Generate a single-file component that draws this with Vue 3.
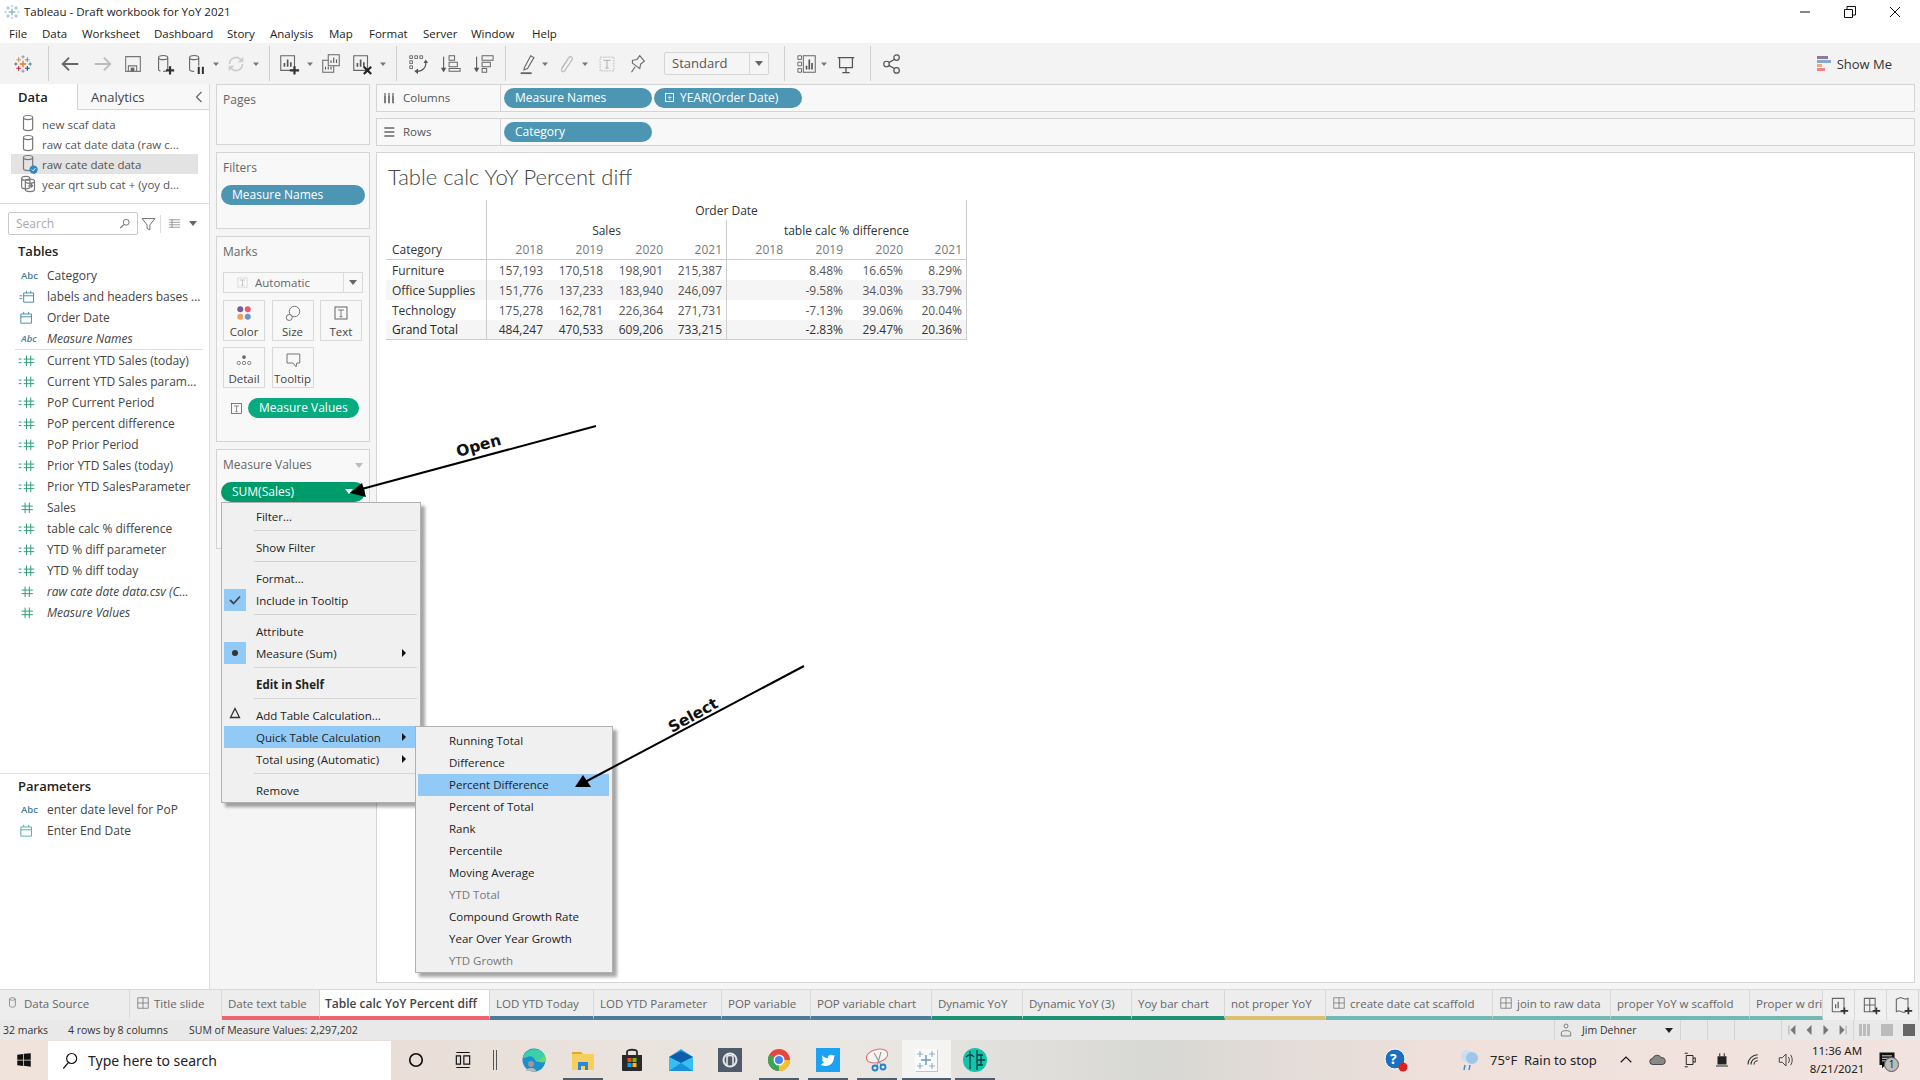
<script setup>
const g = '#666'
const s = (d, c = g, w = 1.3) => `<path d="${d}" fill="none" stroke="${c}" stroke-width="${w}"/>`
const cyl = (c = g) => s('M6 5c0-3 10-3 10 0v12c0 3-10 3-10 0zM6 5c0 3 10 3 10 0', c)
const cross = (x, y, r, c, w = 1.1) => s(`M${x - r} ${y}h${2 * r}M${x} ${y - r}v${2 * r}`, c, w)
const icons = {
  logo: cross(12, 12, 3.6, '#e8762b', 1.5) + cross(7.300, 7.300, 2.600, '#eb912b', 1.2) + cross(16.700, 7.300, 2.600, '#6f9bb0', 1.2) + cross(7.300, 16.700, 2.600, '#c72037', 1.2) + cross(16.700, 16.700, 2.600, '#1f4e79', 1.2) + cross(4.200, 12, 1.800, '#5b6591', 1) + cross(19.800, 12, 1.800, '#2f78a8', 1) + cross(12, 4.200, 1.800, '#7099a6', 1) + cross(12, 19.800, 1.800, '#7099a6', 1),
  back: s('M4 12h17M11 5l-7 7 7 7', '#666', 2),
  fwd: s('M3 12h17M13 5l7 7-7 7', '#bbb', 2),
  save: s('M4 4h16v16H4zM7 20v-6h9v6', '#777', 1.200) + '<rect x="9.500" y="16" width="4" height="4" fill="#666"/>',
  addds: s('M5 5c0-3 10-3 10 0v13c0 2-4 2-5 2M5 5c0 3 10 3 10 0M5 5v13c0 1 1 1.500 2 2', '#666', 1.200) + s('M13 19h9M17.500 14.500v9', '#333', 2.400),
  pause: s('M5 5c0-3 10-3 10 0v9M5 5c0 3 10 3 10 0M5 5v13c0 1 2 2 5 2', '#666', 1.200) + s('M15 15v8M19.500 15v8', '#333', 2.200),
  refresh: s('M5 12a7 7 0 0 1 12-5l2 2M19 12a7 7 0 0 1-12 5l-2-2', '#ccc', 1.800) + '<path d="M20 4v6h-6zM4 20v-6h6z" fill="#ccc"/>',
  caret: '<path d="M9 10.500h6l-3 3.500z" fill="#777"/>',
  newsheet: s('M3 3h15v16H3z', '#666', 1.200) + s('M7 15v-4M10.500 15V7M14 15v-5', '#555', 1.800) + s('M13 19h10M18 14.500v9', '#333', 2.400),
  dup: s('M9 2h12v12H9z', '#666', 1.100) + s('M12 11V8M15 11V5M18 11V7', '#555', 1.200) + s('M9 8H3v13h12v-7', '#666', 1.100) + s('M6 18v-3M9 18v-3M12 18v-3', '#555', 1.200),
  clear: s('M3 3h15v16H3z', '#666', 1.200) + s('M7 15v-4M10.500 15V7M14 15v-5', '#555', 1.800) + s('M14 15l8 8M22 15l-8 8', '#222', 2.400),
  swap: s('M3 3h3v3H3zM8.500 3h3v3h-3zM14 3h3v3h-3zM3 8.500h3v3H3zM3 14h3v3H3z', '#666', 1) + s('M20 9c2 6-3 11-9 11', '#555', 1.300) + '<path d="M12 17v6l-4-3zM18 11h5l-2.500-4z" fill="#555"/>',
  sorta: s('M5 4v15', '#666', 1.300) + '<path d="M2 16h6l-3 5z" fill="#555"/>' + s('M11 3h6v5h-6zM11 10h9v5h-9zM11 17h12v3H11z', '#666', 1.100),
  sortd: s('M5 4v15', '#666', 1.300) + '<path d="M2 16h6l-3 5z" fill="#555"/>' + s('M11 3h12v5H11zM11 10h9v5h-9zM11 17h5v4h-5z', '#666', 1.100),
  pen: s('M8 16L15 3l3.500 2-7 12-4 1.500z', '#666', 1.200) + '<rect x="4" y="21" width="12" height="2" fill="#666"/>',
  clip: s('M7 17l8-12c2-2.500 5 0 3.500 2.500l-8 12c-2 2-4.500 0-3-2.500l6.500-10', '#bbb', 1.300),
  tbox: '<rect x="4.500" y="4.500" width="15" height="15" fill="none" stroke="#bbb" stroke-dasharray="2 1"/>' + s('M8 8h8M12 8v8.500M10 16.500h4', '#aaa', 1),
  pin: s('M6 21l4-6M7 11l8 6 1-5 4-3-5-6-3 4-5 1z', '#666', 1.200),
  bars: s('M2 3h4v4H2zM2 10h4v4H2zM2 17h4v4H2z', '#666', 1) + s('M8 3h13v18H8z', '#666', 1.100) + s('M11.500 18v-4M14.500 18V7M17.500 18v-7', '#555', 1.800),
  present: s('M3 5h18M5 5v11h14V5M12 16v5M8 21.500h8', '#555', 1.400),
  share: '<circle cx="6" cy="12" r="3" fill="none" stroke="#555" stroke-width="1.300"/><circle cx="17" cy="5" r="3" fill="none" stroke="#555" stroke-width="1.300"/><circle cx="17" cy="19" r="3" fill="none" stroke="#555" stroke-width="1.300"/>' + s('M8.500 10.500L14.500 7M8.500 13.500l6 3.500', '#555'),
  ds: cyl('#777'),
  dssel: cyl('#777') + '<circle cx="17" cy="18" r="4.500" fill="#2f88c4"/>' + s('M15 18l1.500 1.500 2.500-3', '#fff', 1),
  dsmulti: s('M4 6c0-3 9-3 9 0v9c0 3-9 3-9 0zM4 6c0 2.500 9 2.500 9 0', '#777') + s('M8 9c0-3 10-3 10 0v9c0 3-10 3-10 0zM8 9c0 3 10 3 10 0', '#777') + s('M11 14h5M14 12l2 2-2 2', '#777'),
  search: '<circle cx="14" cy="9" r="5" fill="none" stroke="#666" stroke-width="1.500"/>' + s('M10 13l-6 6', '#666', 1.800),
  funnel: s('M3 5h18l-7 9v7l-4-2v-5z', '#666', 1.300),
  list: s('M3 6h18M3 10h18M3 14h18M3 18h18', '#666', 1) + s('M8 5v14', '#666', 1),
  cal: s('M4 7h15v13H4zM4 11h15M8 4v3M15 4v3', '#3f86a8', 1.300),
  calg: s('M4 7h15v13H4zM4 11h15M8 4v3M15 4v3', '#49ac8c', 1.300),
  calcal: s('M8 7h14v13H8zM8 11h14M12 4v3M18 4v3', '#3f86a8', 1.300) + s('M2 11h4M2 15h4', '#3f86a8', 1.200),
  hash: s('M10 5v15M16 5v15M5 10h16M5 15h16', '#2f9e78', 1.400),
  hashcalc: s('M12 5v15M18 5v15M8 10h15M8 15h15', '#2f9e78', 1.400) + s('M1 10h4M1 15h4', '#2f9e78', 1.400),
  color: '<circle cx="7" cy="7" r="4" fill="#7b5d92"/><circle cx="17" cy="7" r="4" fill="#ec5a6e"/><circle cx="7" cy="17" r="4" fill="#f0a266"/><circle cx="17" cy="17" r="4" fill="#6f95c8"/>',
  size: '<circle cx="14" cy="10" r="7" fill="none" stroke="#666" stroke-width="1.200"/><circle cx="7" cy="18" r="4" fill="#f8f8f8" stroke="#666" stroke-width="1.200"/>',
  text: '<rect x="4" y="4" width="16" height="16" fill="none" stroke="#555" stroke-width="1.200"/>' + s('M8 8h8M12 8v9M10 17h4', '#555', 1),
  detail: '<circle cx="12" cy="8" r="2.500" fill="#666"/>' + [5, 12, 19].map(x => `<circle cx="${x}" cy="16" r="2.200" fill="none" stroke="#666"/>`).join(''),
  tip: s('M4 4h17v12h-4l-1 5-4-5H4z', '#666', 1.200),
  grid: s('M3 3h18v18H3zM12 3v18M3 12h18', '#666', 1.200),
  addws: s('M4 4h14v16H4z') + s('M8 16v-5M11 16V8', '#555', 1.400) + s('M14 19h9M18.500 15v8', '#333', 2),
  addgrid: s('M4 4h13v16H4zM4 12h13M10.500 4v16') + s('M14 19h9M18.500 15v8', '#333', 2),
  addstory: s('M4 5l5-2 6 2 3-1v15l-5 2-6-2-3 1z') + s('M14 19h9M18.500 15v8', '#333', 2),
  user: '<circle cx="12" cy="6" r="3" fill="none" stroke="#666" stroke-width="1.200"/>' + s('M5 21v-5c0-4 14-4 14 0v5z', '#666', 1.200),
  win: '<path d="M3 5l8-1v7.500H3zM12 3.800L21 3v8.500h-9zM3 12.500h8V20l-8-1zM12 12.500h9V21l-9-1.200z" fill="#111"/>',
  tsearch: '<circle cx="14" cy="9" r="6" fill="none" stroke="#111" stroke-width="1.400"/>' + s('M10 14l-6 7', '#111', 1.500),
  cortana: '<circle cx="12" cy="12" r="7.500" fill="none" stroke="#111" stroke-width="2"/>',
  taskview: s('M4 3h16M4 21h16M4 7h5v10H4zM13 7h7v10h-7z', '#111', 1.400),
  edge: '<circle cx="12" cy="12" r="11.500" fill="#1c8fd0"/><path d="M1 10C3 1 16-2 22 6c3 4 1 8-3 8-3 0-5 0-6-2-1-3-5-5-8-3-2 1-3 1-4 1z" fill="#3ad0a8"/><path d="M22 7c1.500 2 2 5 1 7-3 1-7 0-8-2 3 0 5-1 7-5z" fill="#68d868"/><circle cx="9" cy="16" r="3" fill="#9a9a98"/><path d="M4 23c0-4 10-4 10 0z" fill="#b9b9b6"/>',
  folder: '<path d="M1 4h9l2 2H1z" fill="#e0a92c"/><path d="M1 6h22v16H1z" fill="#f7cf5f"/><path d="M7 22v-8h10v8h-3v-4h-4v4z" fill="#2a86d8"/>',
  store: '<path d="M2 7h20v15a1 1 0 0 1-1 1H3a1 1 0 0 1-1-1z" fill="#2a2a2a"/>' + s('M7 8V4c0-3 10-3 10 0v4', '#2a2a2a', 1.800) + '<rect x="7.500" y="10" width="4" height="4" fill="#f25022"/><rect x="12.500" y="10" width="4" height="4" fill="#7fba00"/><rect x="7.500" y="15" width="4" height="4" fill="#00a4ef"/><rect x="12.500" y="15" width="4" height="4" fill="#ffb900"/>',
  mail: '<path d="M0 9L12 1l12 8v14H0z" fill="#2aa5e6"/><path d="M0 9l12 6 12-6-12-6z" fill="#0f5cab"/><path d="M0 9l12 6 12-6v14H0z" fill="#36c0f0"/><path d="M0 23l12-8 12 8z" fill="#1a8fdc"/>',
  music: '<rect x="0" y="0" width="24" height="24" fill="#4f5b6b"/><circle cx="12" cy="12" r="7.500" fill="#e8e8e8"/><circle cx="12" cy="12" r="5.500" fill="#4f5b6b"/>' + s('M9 17V9c0-2 6-2 6 0v8', '#e8e8e8', 1.600),
  chrome: '<circle cx="12" cy="12" r="11" fill="#e8453c"/><path d="M12 12L2.500 6.500A11 11 0 0 0 12 23z" fill="#34a853"/><path d="M12 12h11A11 11 0 0 1 12 23z" fill="#fbc02d"/><circle cx="12" cy="12" r="5.500" fill="#fff"/><circle cx="12" cy="12" r="4" fill="#4285f4"/>',
  twitter: '<rect x="0" y="0" width="24" height="24" fill="#1da1f2"/><path d="M5 17c6 2.500 13 0 13-8l1.500-1.700-2 .4C16 5.500 11 7 12 10.200c-2.500 0-4.500-1.200-6-2.900 0 2 0 3.200 1.500 4.200l-1.500-.3c0 1.600 1 2.600 2.400 3.100-1 .6-2.300 1.400-3.400 2.700z" fill="#fff"/>',
  snip: '<ellipse cx="12" cy="8" rx="11" ry="6.500" transform="rotate(-15 12 8)" fill="#fff" fill-opacity=".6" stroke="#e67070" stroke-width="1"/>' + s('M9 5l7 12M16 4l-4 14', '#999', 1.200) + '<circle cx="10" cy="20" r="2.500" fill="none" stroke="#1f7fd0" stroke-width="1.800"/><circle cx="18" cy="19" r="2.500" fill="none" stroke="#1f7fd0" stroke-width="1.800"/>',
  tab: cross(12, 12, 5, '#6f9bc0', 1.500) + cross(6, 6, 3, '#8cb3d0', 1.200) + cross(18, 6, 3, '#8cb3d0', 1.200) + cross(6, 18, 3, '#8cb3d0', 1.200) + cross(18, 18, 3, '#8cb3d0', 1.200) + cross(12, 3, 2, '#a8c4d8', 1) + cross(12, 21, 2, '#a8c4d8', 1) + cross(2.500, 12, 2, '#a8c4d8', 1) + cross(21.500, 12, 2, '#a8c4d8', 1),
  tabtile: '<path d="M1 1h22v22H1z" fill="#fafafa"/><path d="M23 2h1v22H2v-1h21z" fill="#c4c4c4"/>' + cross(12, 12, 5, '#6f9bc0', 1.500) + cross(6, 6, 3, '#8cb3d0', 1.200) + cross(18, 6, 3, '#8cb3d0', 1.200) + cross(6, 18, 3, '#8cb3d0', 1.200) + cross(18, 18, 3, '#8cb3d0', 1.200),
  app: '<circle cx="12" cy="12" r="12" fill="#11c4ae"/>' + s('M7 3v18M3 9c2-3 6-3 8 0M14 2v20M14 7h6M14 12h8M14 17h6M18 7v10', '#0a3d38', 1.300),
  help: '<circle cx="11" cy="11" r="10" fill="#1a6fc4"/><circle cx="11" cy="11" r="10" fill="none" stroke="#fff"/><circle cx="19" cy="19" r="4.500" fill="#e02020"/>',
  weather: '<circle cx="10" cy="8" r="6" fill="#c8dff2"/><circle cx="15" cy="10" r="6" fill="#9cc6ea"/>' + s('M8 17l-1 5M13 17l-1 5', '#3e8fd6', 1.500),
  chev: s('M5 15l7-7 7 7', '#111', 1.500),
  cloud: '<path d="M5 18a4 4 0 0 1 0-8c1-5 9-6 11-1a4.500 4.500 0 0 1 2 9z" fill="#888" stroke="#222"/>',
  cam: s('M7 6h9v12H7zM16 10l3-1v6l-3-1M5 3h4M5 21h4', '#222', 1.300),
  batt: '<path d="M6 7h12v11H6z" fill="#222"/>' + s('M9 3v4M15 3v4M4 20h16', '#222', 1.300),
  wifi: s('M4 18a13 13 0 0 1 13-13M8 18a9 9 0 0 1 9-9M12 18a5 5 0 0 1 5-5', '#333', 1.500),
  vol: s('M3 9h4l5-5v16l-5-5H3zM15 8c2 2 2 6 0 8M18 5c3 4 3 10 0 14', '#333', 1.200),
  note: '<path d="M3 3h18v15H10l-4 4v-4H3z" fill="#111"/>' + s('M6 7h12M6 10h12M6 13h8', '#fff', 1)
}

const place = (items, start) => {
  let prev = start
  return items.map(([i, x]) => {
    const w = i === 'sep' ? 1 : i === 'caret' ? 12 : 22
    const left = x - w / 2
    const m = left - prev
    prev = left + w
    return { i, m, vb: i === 'caret' ? '6 6 12 12' : '0 0 24 24', w }
  })
}
const tbLeft = place([
  ['logo', 23], ['sep', 48], ['back', 70], ['fwd', 103], ['save', 133], ['addds', 165], ['pause', 196], ['caret', 216], ['refresh', 236], ['caret', 256], ['sep', 269],
  ['newsheet', 289], ['caret', 310], ['dup', 331], ['clear', 362], ['caret', 383], ['sep', 396], ['swap', 418], ['sorta', 450], ['sortd', 483], ['sep', 505],
  ['pen', 528], ['caret', 545], ['clip', 566], ['caret', 585], ['tbox', 607], ['pin', 637]
], 0)
const tbRight = place([['sep', 784], ['bars', 807], ['caret', 824], ['present', 846], ['sep', 870], ['share', 892]], 769)

const menus = [['File', 9], ['Data', 42], ['Worksheet', 82], ['Dashboard', 154], ['Story', 227], ['Analysis', 270], ['Map', 329], ['Format', 369], ['Server', 423], ['Window', 471], ['Help', 532], ['', 580]]
  .map(([t, x], k, a) => ({ t, w: k < a.length - 1 ? a[k + 1][1] - x : 0 })).filter(m => m.t)

const dss = [
  { i: 'ds', t: 'new scaf data' }, { i: 'ds', t: 'raw cat date data (raw c...' },
  { i: 'dssel', t: 'raw cate date data', sel: true }, { i: 'dsmulti', t: 'year qrt sub cat + (yoy d...' }
]
const dims = [
  { i: 'abc', t: 'Category' }, { i: 'calcal', t: 'labels and headers bases ...' }, { i: 'cal', t: 'Order Date' }, { i: 'abc', t: 'Measure Names', em: true }
]
const meas = [
  ['hashcalc', 'Current YTD Sales (today)'], ['hashcalc', 'Current YTD Sales param...'], ['hashcalc', 'PoP Current Period'], ['hashcalc', 'PoP percent difference'],
  ['hashcalc', 'PoP Prior Period'], ['hashcalc', 'Prior YTD Sales (today)'], ['hashcalc', 'Prior YTD SalesParameter'], ['hash', 'Sales'], ['hashcalc', 'table calc % difference'],
  ['hashcalc', 'YTD % diff parameter'], ['hashcalc', 'YTD % diff today'], ['hash', 'raw cate date data.csv (C...', true], ['hash', 'Measure Values', true]
].map(([i, t, em]) => ({ i, t, em }))

const years = ['2018', '2019', '2020', '2021']
const rows = [
  { n: 'Furniture', v: ['157,193', '170,518', '198,901', '215,387', '', '8.48%', '16.65%', '8.29%'] },
  { n: 'Office Supplies', shade: true, v: ['151,776', '137,233', '183,940', '246,097', '', '-9.58%', '34.03%', '33.79%'] },
  { n: 'Technology', v: ['175,278', '162,781', '226,364', '271,731', '', '-7.13%', '39.06%', '20.04%'] },
  { n: 'Grand Total', shade: true, total: true, v: ['484,247', '470,533', '609,206', '733,215', '', '-2.83%', '29.47%', '20.36%'] }
]

const menu1 = [
  { t: 'Filter...' }, { sep: 1 }, { t: 'Show Filter' }, { sep: 1 }, { t: 'Format...' }, { t: 'Include in Tooltip', mark: 'check' }, { sep: 1 },
  { t: 'Attribute' }, { t: 'Measure (Sum)', mark: 'dot', sub: true }, { sep: 1 }, { t: 'Edit in Shelf', bold: true }, { sep: 1 },
  { t: 'Add Table Calculation...', mark: 'delta' }, { t: 'Quick Table Calculation', sub: true, hi: true }, { t: 'Total using (Automatic)', sub: true }, { sep: 1 }, { t: 'Remove' }
]
const menu2 = [
  { t: 'Running Total' }, { t: 'Difference' }, { t: 'Percent Difference', hi: true }, { t: 'Percent of Total' }, { t: 'Rank' }, { t: 'Percentile' }, { t: 'Moving Average' },
  { t: 'YTD Total', dis: true }, { t: 'Compound Growth Rate' }, { t: 'Year Over Year Growth' }, { t: 'YTD Growth', dis: true }
]

const red = '#f1626f', blue = '#4e7a9c', green = '#1c9273', yel = '#dcc070', teal = '#73b9b3'
const tabs = [
  { t: 'Data Source', w: 130, i: 'ds' }, { t: 'Title slide', w: 92, i: 'grid' }, { t: 'Date text table', w: 98, c: red },
  { t: 'Table calc YoY Percent diff', w: 170, c: red, on: true }, { t: 'LOD YTD Today', w: 104, c: blue }, { t: 'LOD YTD Parameter', w: 128, c: blue },
  { t: 'POP variable', w: 89, c: blue }, { t: 'POP variable chart', w: 121, c: blue }, { t: 'Dynamic YoY', w: 91, c: green }, { t: 'Dynamic YoY (3)', w: 109, c: green },
  { t: 'Yoy bar chart', w: 93, c: green }, { t: 'not proper YoY', w: 101, c: yel }, { t: 'create date cat scaffold', w: 167, c: teal, i: 'grid' },
  { t: 'join to raw data', w: 118, c: teal, i: 'grid' }, { t: 'proper YoY w scaffold', w: 139, c: teal }, { t: 'Proper w dri', w: 73, c: teal }
]
const apps = [['edge'], ['folder', 1], ['store'], ['mail'], ['music'], ['chrome', 1], ['twitter', 1], ['snip', 1], ['tabtile', 1, 1], ['app', 1]]
  .map(([i, run, act]) => ({ i, run, act }))
const navs = ['M1 0v10M8 0v10L3 5z', 'M7 0v10L2 5z', 'M2 0v10l5-5z', 'M8 0v10M1 0v10l5-5z']
</script>

<template>
  <div class="app">
    <header class="titlebar">
      <svg class="ti" viewBox="0 0 24 24" v-html="icons.tab"></svg>
      <span class="titletext">Tableau - Draft workbook for YoY 2021</span>
      <div class="winbtns">
        <svg width="12" height="12" viewBox="0 0 12 12"><path d="M1 6h10" stroke="#111" /></svg>
        <svg width="12" height="12" viewBox="0 0 12 12"><path d="M.5 3.500h8v8h-8zM3 3.500V.5h8.500V9H8.500" fill="none" stroke="#111" /></svg>
        <svg width="12" height="12" viewBox="0 0 12 12"><path d="M1 1l10 10M11 1L1 11" stroke="#111" /></svg>
      </div>
    </header>
    <nav class="menubar">
      <span v-for="m in menus" :key="m.t" class="menuitem" :style="{ width: m.w + 'px' }">{{ m.t }}</span>
    </nav>
    <div class="toolbar">
      <template v-for="(b, k) in tbLeft" :key="k">
        <span v-if="b.i === 'sep'" class="tbsep" :style="{ marginLeft: b.m + 'px' }"></span>
        <svg v-else class="tbi" :width="b.w" height="22" :viewBox="b.vb" :style="{ marginLeft: b.m + 'px' }" v-html="icons[b.i]"></svg>
      </template>
      <div class="standard"><span class="stdtext">Standard</span><span class="stdarrow"><i class="tri"></i></span></div>
      <template v-for="(b, k) in tbRight" :key="'r' + k">
        <span v-if="b.i === 'sep'" class="tbsep" :style="{ marginLeft: b.m + 'px' }"></span>
        <svg v-else class="tbi" :width="b.w" height="22" :viewBox="b.vb" :style="{ marginLeft: b.m + 'px' }" v-html="icons[b.i]"></svg>
      </template>
      <div class="showme">
        <div class="smicon"><i class="s1"></i><i class="s2"></i><i class="s3"></i><i class="s4"></i></div>
        <span>Show Me</span>
      </div>
    </div>

    <main class="main">
      <aside class="left">
        <div class="ltabs">
          <div class="ltab on">Data</div>
          <div class="ltab off">Analytics
            <svg class="collapse" width="8" height="12" viewBox="0 0 8 12"><path d="M6.500 1L1.500 6l5 5" fill="none" stroke="#666" stroke-width="1.200" /></svg>
          </div>
        </div>
        <div class="dslist">
          <div v-for="d in dss" :key="d.t" class="dsrow" :class="{ sel: d.sel }">
            <svg class="dsi" viewBox="0 0 24 24" v-html="icons[d.i]"></svg>
            <span>{{ d.t }}</span>
          </div>
        </div>
        <div class="searchbar">
          <div class="searchbox"><span>Search</span><svg class="si" viewBox="0 0 24 24" v-html="icons.search"></svg></div>
          <svg class="fi" viewBox="0 0 24 24" v-html="icons.funnel"></svg>
          <span class="vsep"></span>
          <svg class="li" viewBox="0 0 24 24" v-html="icons.list"></svg>
          <i class="tri small"></i>
        </div>
        <h3 class="lhead">Tables</h3>
        <div v-for="f in dims" :key="f.t" class="field" :class="{ em: f.em }">
          <span class="ficon">
            <span v-if="f.i === 'abc'" class="abc">Abc</span>
            <svg v-else viewBox="0 0 24 24" v-html="icons[f.i]"></svg>
          </span>
          <span>{{ f.t }}</span>
        </div>
        <div class="fdiv"></div>
        <div v-for="f in meas" :key="f.t" class="field" :class="{ em: f.em }">
          <span class="ficon"><svg viewBox="0 0 24 24" v-html="icons[f.i]"></svg></span>
          <span>{{ f.t }}</span>
        </div>
        <div class="lspacer"></div>
        <div class="params">
          <h3 class="lhead">Parameters</h3>
          <div class="field"><span class="ficon"><span class="abc">Abc</span></span><span>enter date level for PoP</span></div>
          <div class="field"><span class="ficon"><svg viewBox="0 0 24 24" v-html="icons.calg"></svg></span><span>Enter End Date</span></div>
        </div>
      </aside>

      <section class="cards">
        <div class="card pages"><div class="clabel">Pages</div></div>
        <div class="card filters">
          <div class="clabel">Filters</div>
          <div class="pill blue wide">Measure Names</div>
        </div>
        <div class="card marks">
          <div class="clabel">Marks</div>
          <div class="markdd">
            <svg class="mi" viewBox="0 0 24 24" v-html="icons.tbox"></svg>
            <span class="mdtext">Automatic</span>
            <span class="mdarrow"><i class="tri"></i></span>
          </div>
          <div class="markbtns">
            <div class="mbtn"><svg viewBox="0 0 24 24" v-html="icons.color"></svg><span>Color</span></div>
            <div class="mbtn"><svg viewBox="0 0 24 24" v-html="icons.size"></svg><span>Size</span></div>
            <div class="mbtn"><svg viewBox="0 0 24 24" v-html="icons.text"></svg><span>Text</span></div>
            <div class="mbtn"><svg viewBox="0 0 24 24" v-html="icons.detail"></svg><span>Detail</span></div>
            <div class="mbtn"><svg viewBox="0 0 24 24" v-html="icons.tip"></svg><span>Tooltip</span></div>
          </div>
          <div class="markpill">
            <svg class="mti" viewBox="0 0 24 24" v-html="icons.text"></svg>
            <div class="pill teal">Measure Values</div>
          </div>
        </div>
        <div class="card mv">
          <div class="clabel mvlabel">Measure Values<i class="tri light"></i></div>
          <div class="pill green wide">SUM(Sales)<i class="tri white"></i></div>
        </div>
      </section>

      <section class="right">
        <div class="shelf">
          <div class="shelfhead"><svg class="shi" viewBox="0 0 24 24"><path d="M6 5v15M12 5v15M18 5v15" stroke="#666" stroke-width="2.500" stroke-dasharray="2 1 30" /></svg>Columns</div>
          <div class="pill blue shpill">Measure Names</div>
          <div class="pill blue shpill"><span class="plus">+</span>YEAR(Order Date)</div>
        </div>
        <div class="shelf">
          <div class="shelfhead"><svg class="shi" viewBox="0 0 24 24"><path d="M5 6h15M5 12h15M5 18h15" stroke="#666" stroke-width="2.500" /></svg>Rows</div>
          <div class="pill blue shpill">Category</div>
        </div>
        <div class="view">
          <h1 class="vtitle">Table calc YoY Percent diff</h1>
          <div class="xtab">
            <div class="c vr span2"></div>
            <div class="c hd center span8 rb">Order Date</div>
            <div class="c hd center span4 vr">Sales</div>
            <div class="c hd center span4 rb">table calc % difference</div>
            <div class="c hd catc vr bb">Category</div>
            <div v-for="(y, i) in [...years, ...years]" :key="i" class="c yr bb" :class="{ vr: i === 3 || i === 7 }">{{ y }}</div>
            <template v-for="r in rows" :key="r.n">
              <div class="c catc vr name" :class="{ shade: r.shade, bb: r.total, strong: r.total }">{{ r.n }}</div>
              <div v-for="(v, i) in r.v" :key="i" class="c num" :class="{ vr: i === 3 || i === 7, shade: r.shade, bb: r.total, strong: r.total }">{{ v }}</div>
            </template>
          </div>
        </div>
      </section>
    </main>

    <div class="tabs">
      <div v-for="t in tabs" :key="t.t" class="tab" :class="{ on: t.on }" :style="{ width: t.w + 'px', borderBottomColor: t.c || 'transparent' }">
        <svg v-if="t.i" class="tabi" viewBox="0 0 24 24" v-html="icons[t.i]"></svg>
        <span>{{ t.t }}</span>
      </div>
      <div class="tabbtn"><svg viewBox="0 0 24 24" v-html="icons.addws"></svg></div>
      <div class="tabbtn"><svg viewBox="0 0 24 24" v-html="icons.addgrid"></svg></div>
      <div class="tabbtn"><svg viewBox="0 0 24 24" v-html="icons.addstory"></svg></div>
    </div>

    <div class="status">
      <span class="st1">32 marks</span>
      <span class="st2">4 rows by 8 columns</span>
      <span>SUM of Measure Values: 2,297,202</span>
      <div class="stright">
        <div class="stuser">
          <svg viewBox="0 0 24 24" v-html="icons.user"></svg><span>Jim Dehner</span><i class="tri dark"></i>
        </div>
        <div class="stcell"></div>
        <div class="stcell"></div>
        <div class="stblank"></div>
        <div class="stnav">
          <svg v-for="n in navs" :key="n" width="8" height="10" viewBox="0 0 9 10"><path :d="n" fill="#777" stroke="#777" stroke-width=".6" /></svg>
        </div>
        <div class="stview">
          <i class="v1"></i><i class="v2"></i><i class="v3"></i>
        </div>
      </div>
    </div>

    <footer class="taskbar">
      <div class="winlogo"><svg viewBox="0 0 24 24" v-html="icons.win"></svg></div>
      <div class="tsearch"><svg viewBox="0 0 24 24" v-html="icons.tsearch"></svg><span>Type here to search</span></div>
      <div class="tslot first"><svg viewBox="0 0 24 24" v-html="icons.cortana"></svg></div>
      <div class="tslot tv"><svg viewBox="0 0 24 24" v-html="icons.taskview"></svg></div>
      <div class="grip"></div>
      <div v-for="a in apps" :key="a.i" class="app-slot" :class="{ run: a.run, act: a.act }">
        <svg viewBox="0 0 24 24" v-html="icons[a.i]"></svg>
      </div>
      <div class="tray">
        <div class="helpic"><svg viewBox="0 0 24 24" v-html="icons.help"></svg><span class="q">?</span></div>
        <svg class="wx" viewBox="0 0 24 24" v-html="icons.weather"></svg>
        <span class="wxtext">75°F&nbsp;&nbsp;Rain to stop</span>
        <svg class="tr chev" viewBox="0 0 24 24" v-html="icons.chev"></svg>
        <svg class="tr" viewBox="0 0 24 24" v-html="icons.cloud"></svg>
        <svg class="tr" viewBox="0 0 24 24" v-html="icons.cam"></svg>
        <svg class="tr" viewBox="0 0 24 24" v-html="icons.batt"></svg>
        <svg class="tr" viewBox="0 0 24 24" v-html="icons.wifi"></svg>
        <svg class="tr" viewBox="0 0 24 24" v-html="icons.vol"></svg>
        <div class="clock"><span>11:36 AM</span><span>8/21/2021</span></div>
        <div class="notif"><svg viewBox="0 0 24 24" v-html="icons.note"></svg><span class="nbadge">1</span></div>
      </div>
    </footer>

    <div class="ctx m1">
      <template v-for="(m, k) in menu1" :key="k">
        <div v-if="m.sep" class="msep"></div>
        <div v-else class="mrow" :class="{ hi: m.hi, bold: m.bold }">
          <span class="mmark" :class="{ blue: m.mark === 'check' || m.mark === 'dot' }">
            <svg v-if="m.mark === 'check'" width="14" height="14" viewBox="0 0 14 14"><path d="M2 7l3.500 3.500L12 3.500" fill="none" stroke="#444" stroke-width="1.800" /></svg>
            <i v-else-if="m.mark === 'dot'" class="mdot"></i>
            <svg v-else-if="m.mark === 'delta'" class="mdelta" width="12" height="12" viewBox="0 0 12 12"><path d="M6 1.500L10.500 10.500H1.500z" fill="none" stroke="#333" stroke-width="1.300" /></svg>
          </span>
          <span class="mlabel">{{ m.t }}</span>
          <i v-if="m.sub" class="subarrow"></i>
        </div>
      </template>
    </div>
    <div class="ctx m2">
      <div v-for="m in menu2" :key="m.t" class="mrow2" :class="{ hi: m.hi, dis: m.dis }">{{ m.t }}</div>
    </div>

    <svg class="annot" width="1920" height="1080" viewBox="0 0 1920 1080">
      <path d="M596 426L358 490" stroke="#000" stroke-width="2" />
      <path d="M350 493L362 483L366 497z" fill="#000" />
      <path d="M804 666L585 782" stroke="#000" stroke-width="2" />
      <path d="M575 787L583 775L591 787z" fill="#000" />
      <text x="0" y="0" class="annot-t" transform="translate(458 457) rotate(-16)">Open</text>
      <text x="0" y="0" class="annot-t" transform="translate(672 733) rotate(-29)">Select</text>
    </svg>
  </div>
</template>

<style>
html, body { margin: 0; padding: 0; background: #fff; }
</style>

<style scoped>
.app {
  position: relative; width: 1920px; height: 1080px; overflow: hidden; display: flex; flex-direction: column;
  font-family: "Open Sans", "Noto Sans", sans-serif; font-size: 12px; color: #333; background: #fff;
}
svg { display: block; flex: none; }
i { display: block; }

.titlebar { height: 23px; display: flex; align-items: center; padding-left: 4px; color: #222; flex: none; }
.ti { width: 16px; height: 16px; margin-right: 4px; }
.titletext { font-size: 11.5px; }
.winbtns { margin-left: auto; display: flex; gap: 33px; padding-right: 19px; }
.menubar { height: 20px; display: flex; align-items: center; padding-left: 9px; flex: none; color: #222; font-size: 11.5px; }
.menuitem { flex: none; white-space: nowrap; }

.toolbar { height: 41px; flex: none; background: #f3f3f3; display: flex; align-items: center; }
.tbi { flex: none; }
.tbsep { width: 1px; height: 35px; background: #d0d0d0; flex: none; }
.standard { width: 105px; height: 23px; margin-left: 16px; border: 1px solid #d4d4d4; border-radius: 2px; box-sizing: border-box; display: flex; align-items: center; background: #f5f5f5; flex: none; }
.stdtext { flex: 1; padding-left: 7px; color: #555; font-size: 13px; padding-bottom: 1px; }
.stdarrow { width: 18px; height: 100%; border-left: 1px solid #d8d8d8; display: flex; align-items: center; justify-content: center; }
.tri { width: 0; height: 0; border-left: 4px solid transparent; border-right: 4px solid transparent; border-top: 5px solid #666; }
.showme { margin-left: auto; display: flex; align-items: center; gap: 6px; padding-right: 28px; font-size: 13px; color: #333; }
.smicon { width: 14px; display: flex; flex-direction: column; gap: 1px; }
.smicon i { height: 3px; }
.s1 { width: 11px; background: #8a7aa0; }
.s2 { width: 14px; background: #86a7cf; }
.s3 { width: 5px; background: #f3a77a; }
.s4 { width: 8px; background: #f4808a; }

.main { flex: 1; min-height: 0; display: flex; background: #f5f5f5; }
.left { width: 210px; flex: none; box-sizing: border-box; border-right: 1px solid #dcdcdc; background: #fff; display: flex; flex-direction: column; }
.ltabs { display: flex; height: 26px; flex: none; }
.ltab { display: flex; align-items: center; box-sizing: border-box; font-size: 13px; }
.ltab.on { width: 77px; padding-left: 18px; font-weight: 600; color: #222; }
.ltab.off { flex: 1; padding-left: 13px; color: #444; border-left: 1px solid #d4d4d4; border-bottom: 1px solid #d4d4d4; background: #f8f8f8; }
.collapse { margin-left: auto; margin-right: 6px; }
.dslist { padding: 4px 0 9px; border-bottom: 1px solid #dcdcdc; }
.dsrow { height: 20px; margin: 0 11px; padding-left: 10px; display: flex; align-items: center; color: #555; font-size: 11.5px; gap: 2px; white-space: nowrap; }
.dsrow.sel { background: #e3e3e3; }
.dsi { width: 22px; height: 22px; margin-left: -3px; }
.searchbar { display: flex; align-items: center; padding: 8px 0 0 8px; height: 23px; }
.searchbox { width: 130px; height: 23px; box-sizing: border-box; border: 1px solid #c8c8c8; border-radius: 2px; display: flex; align-items: center; justify-content: space-between; padding: 0 5px 0 7px; color: #aaa; }
.si { width: 14px; height: 14px; }
.fi { width: 17px; height: 17px; margin-left: 2px; }
.vsep { width: 1px; height: 18px; background: #ddd; margin: 0 6px 0 3px; }
.li { width: 15px; height: 15px; }
.tri.small { margin-left: 7px; }
.lhead { margin: 0; padding-left: 18px; height: 20px; line-height: 20px; font-size: 13px; font-weight: 600; color: #222; }
.searchbar + .lhead { margin-top: 6px; margin-bottom: 3.5px; flex: none; }
.field { height: 21px; flex: none; display: flex; align-items: center; font-size: 12px; color: #444; white-space: nowrap; }
.field.em { font-style: italic; }
.ficon { width: 47px; flex: none; padding-left: 19px; box-sizing: border-box; display: flex; align-items: center; }
.ficon svg { width: 17px; height: 17px; margin-left: -1px; }
.abc { font-size: 9.5px; color: #3f7f9e; font-weight: 600; margin-left: 2px; }
.fdiv { height: 1px; background: #dcdcdc; margin: 0 6px 0 15px; flex: none; }
.lspacer { flex: 1; }
.params { border-top: 1px solid #e2e2e2; padding: 2px 0 0; height: 216px; box-sizing: border-box; flex: none; }
.params .lhead { margin-bottom: 3px; }

.cards { width: 154px; flex: none; margin: 0 6px; display: flex; flex-direction: column; gap: 7px; box-sizing: border-box; }
.card { box-sizing: border-box; border: 1px solid #d4d4d4; background: #f8f8f8; flex: none; position: relative; }
.clabel { padding: 7px 0 0 6px; color: #666; font-size: 12px; line-height: 16px; }
.pages { height: 61px; }
.filters { height: 77px; }
.marks { height: 206px; }
.mv { height: 100px; }
.pill { height: 20px; border-radius: 10px; color: #fff; display: flex; align-items: center; font-size: 12px; box-sizing: border-box; white-space: nowrap; padding-bottom: 1px; }
.pill.blue { background: #4d96b3; }
.pill.teal { background: #08ab80; }
.pill.green { background: #009b6b; }
.pill.wide { margin: 9px 4px 0 4px; padding-left: 11px; }
.markdd { margin: 12px 6px 0; height: 21px; box-sizing: border-box; border: 1px solid #d8d8d8; display: flex; align-items: center; color: #666; font-size: 11.5px; }
.mi { width: 15px; height: 15px; margin: 0 5px 0 11px; }
.mdtext { flex: 1; }
.mdarrow { width: 18px; height: 100%; border-left: 1px solid #ddd; display: flex; align-items: center; justify-content: center; }
.markbtns { display: grid; grid-template-columns: repeat(3, 42px); column-gap: 6.5px; row-gap: 6px; margin: 7px 6px 0; }
.mbtn { height: 41px; box-sizing: border-box; border: 1px solid #d8d8d8; display: flex; flex-direction: column; align-items: center; justify-content: space-between; padding: 3px 0 1px; font-size: 11.5px; color: #444; line-height: 14px; }
.mbtn svg { width: 18px; height: 18px; }
.markpill { display: flex; align-items: center; margin: 10px 0 0 12px; gap: 4px; }
.mti { width: 15px; height: 15px; }
.markpill .pill { width: 111px; padding-left: 11px; }
.mvlabel { display: flex; align-items: center; justify-content: space-between; padding-right: 6px; }
.tri.light { border-top-color: #bbb; }
.tri.white { border-top-color: #fff; position: absolute; right: 12px; }
.pill.green { position: relative; }

.right { flex: 1; min-width: 0; display: flex; flex-direction: column; gap: 6px; padding-right: 5px; box-sizing: border-box; padding-bottom: 6px; }
.shelf { height: 28px; flex: none; box-sizing: border-box; border: 1px solid #d4d4d4; background: #f8f8f8; display: flex; align-items: center; gap: 2px; padding-right: 2px; }
.shelfhead { width: 124px; flex: none; height: 100%; box-sizing: border-box; border-right: 1px solid #d4d4d4; margin-right: 1px; display: flex; align-items: center; color: #555; font-size: 11.5px; padding-left: 4px; padding-bottom: 1px; gap: 6px; }
.shi { width: 16px; height: 16px; }
.shpill { width: 148px; padding-left: 11px; }
.plus { width: 9px; height: 9px; border: 1px solid #fff; box-sizing: border-box; margin-right: 6px; font-size: 9px; line-height: 7px; text-align: center; }
.view { flex: 1; min-height: 0; box-sizing: border-box; border: 1px solid #d4d4d4; background: #fff; padding: 0 0 0 9px; }
.vtitle { margin: 0; padding-left: 2px; font-family: "Lato", "Open Sans", sans-serif; font-weight: 300; font-size: 22px; line-height: 26px; padding-top: 11px; color: #444; }
.xtab { display: grid; grid-template-columns: 101px repeat(8, 60px); grid-auto-rows: 20px; width: 581px; margin-top: 10px; font-size: 12px; color: #333; }
.c { box-sizing: border-box; display: flex; align-items: center; padding-right: 4px; white-space: nowrap; justify-content: flex-end; color: #555; }
.hd { color: #333; font-weight: 500; }
.vr { border-right: 1px solid #ccc; }
.rb { border-right: 1px solid #ccc; }
.bb { border-bottom: 1px solid #ccc; }
.center { justify-content: center; padding-right: 0; }
.span2 { grid-row: span 2; }
.span4 { grid-column: span 4; }
.span8 { grid-column: span 8; }
.catc { justify-content: flex-start; padding-left: 6px; }
.yr { color: #777; }
.name { color: #333; }
.shade { background: #f5f5f5; }
.strong { color: #222; font-weight: 500; }
.num.strong { color: #333; }

.tabs { height: 31px; flex: none; display: flex; background: #eaeaea; border-top: 1px solid #d8d8d8; box-sizing: border-box; }
.tab { flex: none; box-sizing: border-box; height: 30px; display: flex; align-items: center; padding-left: 6px; gap: 4px; border-right: 1px solid #d8d8d8; border-bottom: 4px solid transparent; color: #666; font-size: 11.5px; white-space: nowrap; overflow: hidden; background: #ededed; }
.tab.on { background: #fff; font-weight: 600; color: #444; font-size: 12px; padding-left: 5px; }
.tabi { width: 14px; height: 14px; }
.tabbtn { width: 32px; flex: none; border-right: 1px solid #d8d8d8; display: flex; align-items: center; justify-content: center; box-sizing: border-box; background: #f0f0f0; }
.tabbtn svg { width: 20px; height: 20px; }

.status { height: 20px; flex: none; background: #e9e9e9; display: flex; align-items: center; padding-left: 3px; font-size: 10.5px; color: #333; }
.st1 { width: 65px; }
.st2 { width: 121px; }
.stright { margin-left: auto; height: 100%; display: flex; }
.stuser { width: 127px; box-sizing: border-box; border-left: 1px solid #d4d4d4; border-right: 1px solid #d4d4d4; display: flex; align-items: center; padding-left: 3px; gap: 8px; position: relative; }
.stuser svg { width: 16px; height: 16px; }
.tri.dark { position: absolute; right: 7px; border-top-color: #222; }
.stcell { width: 27px; border-right: 1px solid #d4d4d4; box-sizing: border-box; }
.stblank { width: 47px; border-right: 1px solid #d4d4d4; box-sizing: border-box; }
.stnav { width: 72px; box-sizing: border-box; border-right: 1px solid #d4d4d4; display: flex; align-items: center; gap: 9px; padding-left: 6px; }
.stview { width: 66px; display: flex; align-items: center; justify-content: space-around; box-sizing: border-box; }
.stview i { width: 12px; height: 12px; }
.v1 { background: repeating-linear-gradient(90deg, #bbb 0 3px, transparent 3px 4px); }
.v2 { background: #bbb; }
.v3 { background: #666; }

.taskbar { height: 40px; flex: none; display: flex; align-items: stretch; background: linear-gradient(90deg, #efe3dc 0%, #e9dcd5 15%, #eae7e3 45%, #d8d8d4 60%, #efe0db 75%, #f1e3df 100%); }
.winlogo { width: 48px; flex: none; display: flex; align-items: center; justify-content: center; }
.winlogo svg { width: 18px; height: 18px; }
.tsearch { width: 343px; flex: none; background: #fff; display: flex; align-items: center; box-sizing: border-box; padding-left: 12px; gap: 8px; font-family: "Noto Sans", sans-serif; font-size: 14px; color: #222; margin-top: 1px; }
.tsearch svg { width: 20px; height: 20px; }
.tslot { display: flex; align-items: center; justify-content: center; flex: none; }
.tslot svg { width: 20px; height: 20px; }
.first { width: 48px; margin-left: 1px; }
.tv { width: 46px; }
.grip { width: 4px; margin: 10px 12.5px 10px 7px; border-left: 1px solid #555; border-right: 1px solid #555; flex: none; box-sizing: border-box; }
.app-slot { width: 49px; flex: none; display: flex; align-items: center; justify-content: center; box-sizing: border-box; position: relative; }
.app-slot svg { width: 24px; height: 24px; }
.app-slot.run::after { content: ""; position: absolute; left: 4.500px; bottom: 0; width: 40px; height: 2px; background: #4f5d6b; }
.app-slot.act { background: #f4f4f2; }
.app-slot.act::after { left: 0; width: 49px; }
.tray { margin-left: auto; display: flex; align-items: center; padding-right: 23px; color: #222; font-family: "Noto Sans", sans-serif; }
.helpic { position: relative; margin-right: 49px; }
.helpic svg { width: 24px; height: 24px; }
.q { position: absolute; left: 6px; top: 0; color: #fff; font-weight: 700; font-size: 14px; line-height: 21px; }
.wx { width: 24px; height: 24px; margin-right: 9px; }
.wxtext { font-size: 13px; width: 127px; flex: none; white-space: nowrap; }
.tr { width: 18px; height: 18px; margin-right: 14px; }
.clock { display: flex; flex-direction: column; align-items: center; font-size: 11.5px; line-height: 18px; width: 62px; margin-left: -3px; }
.notif { position: relative; margin-left: 9px; }
.notif svg { width: 20px; height: 20px; }
.nbadge { position: absolute; left: 7px; top: 7px; width: 15px; height: 15px; border-radius: 50%; background: #bbb; border: 1px solid #555; box-sizing: border-box; font-size: 10px; line-height: 13px; text-align: center; }

.ctx { position: absolute; box-sizing: border-box; background: #f0f0f0; border: 1px solid #b0b0b0; box-shadow: 4px 4px 3px rgba(0, 0, 0, 0.35); font-size: 11.5px; color: #222; }
.m1 { left: 221px; top: 502px; width: 200px; height: 301px; padding: 2px 2px; }
.mrow { height: 22px; display: flex; align-items: center; position: relative; }
.mrow.hi { background: #91c9f7; margin-right: 3px; }
.mrow.bold { font-weight: 700; }
.mmark { width: 22px; height: 22px; margin-right: 10px; flex: none; display: flex; align-items: center; justify-content: center; }
.mmark.blue { background: #91c9f7; }
.mdot { width: 6px; height: 6px; border-radius: 50%; background: #333; }
.mdelta { margin-top: -4px; }
.mlabel { white-space: nowrap; }
.subarrow { position: absolute; right: 12px; width: 0; height: 0; border-top: 4px solid transparent; border-bottom: 4px solid transparent; border-left: 4px solid #111; }
.mrow.hi .subarrow { right: 9px; }
.msep { height: 1px; background: #d4d4d4; margin: 3px 1px 5px 30px; }
.m2 { left: 415px; top: 726px; width: 198px; height: 247px; padding: 3px 2px; z-index: 1; }
.mrow2 { height: 22px; line-height: 22px; padding-left: 31px; white-space: nowrap; }
.mrow2.hi { background: #91c9f7; margin-right: 1px; }
.mrow2.dis { color: #777; }
.annot { position: absolute; left: 0; top: 0; z-index: 2; pointer-events: none; }
.annot-t { font-family: "DejaVu Sans", sans-serif; font-weight: 700; font-size: 15.5px; fill: #111; }
</style>
